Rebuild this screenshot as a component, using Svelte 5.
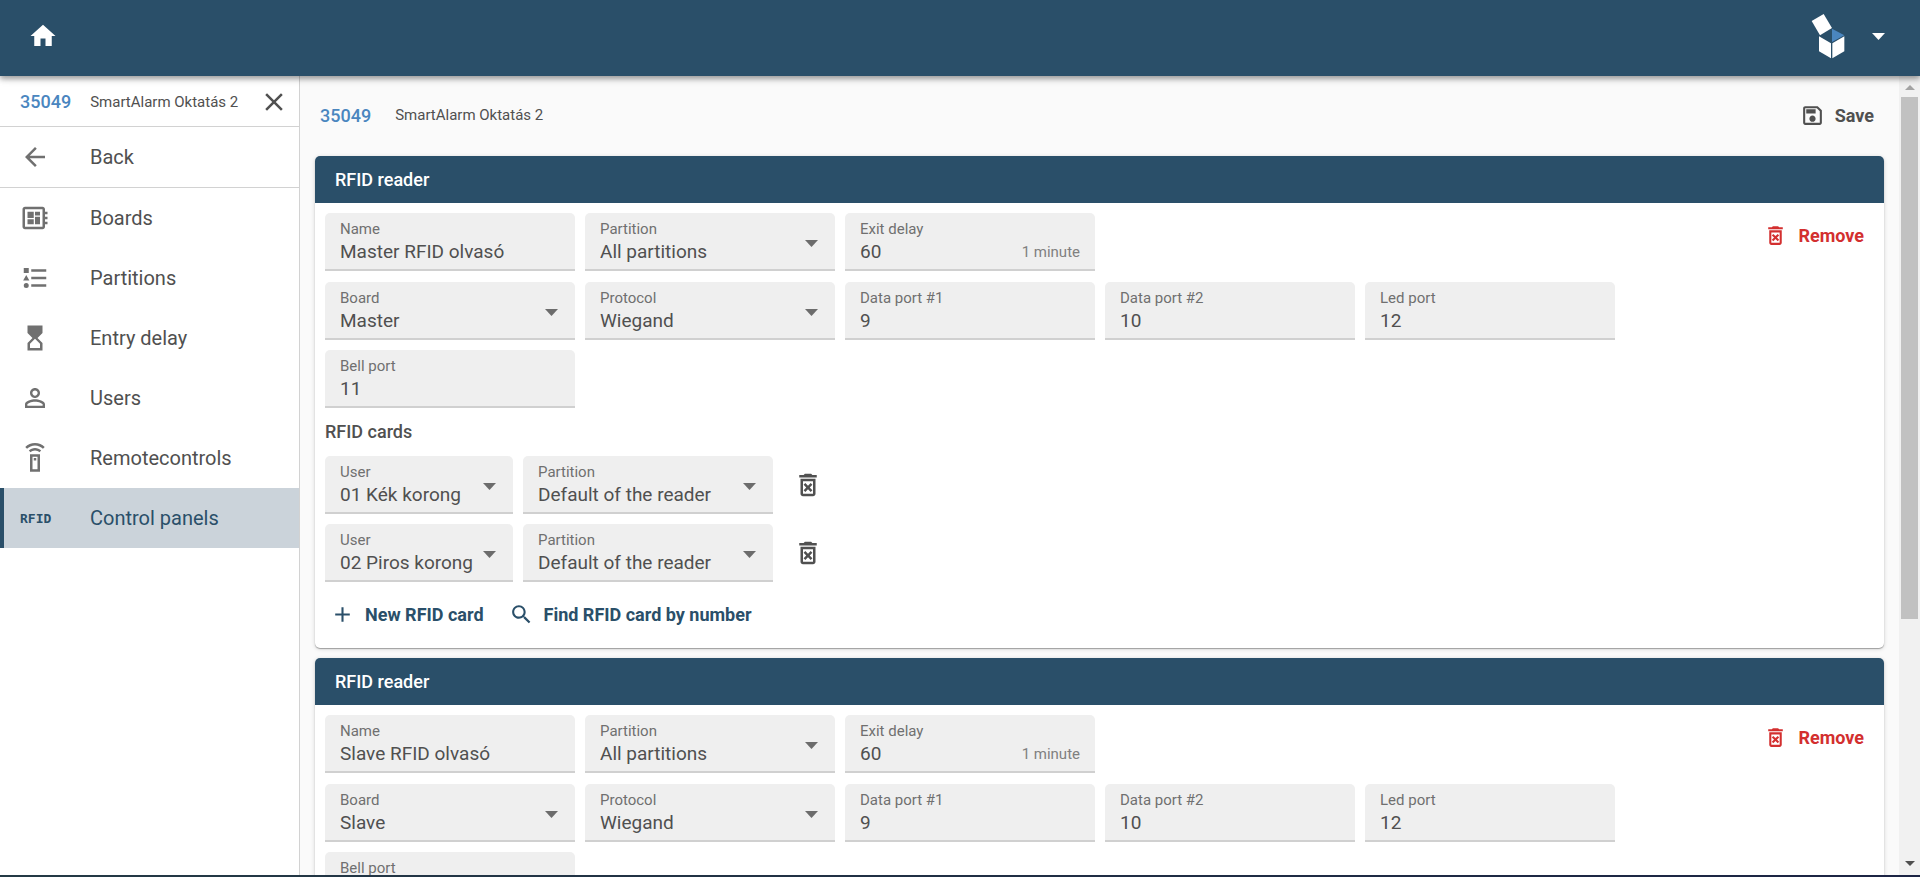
<script lang="ts">
	interface MenuItem {
		label: string;
		icon: string;
	}

	interface RfidCard {
		user: string;
		partition: string;
	}

	interface Reader {
		id: string;
		name: string;
		partition: string;
		exitDelay: number;
		exitDelayHint: string;
		board: string;
		protocol: string;
		ports: { label: string; value: number }[];
		cards: RfidCard[];
	}

	const panelId = '35049';
	const panelName = 'SmartAlarm Oktatás 2';

	const icons: Record<string, string> = {
		home: 'M10 20v-6h4v6h5v-8h3L12 3 2 12h3v8z',
		close: 'M19 6.41L17.59 5 12 10.59 6.41 5 5 6.41 10.59 12 5 17.59 6.41 19 12 13.41 17.59 19 19 17.59 13.41 12z',
		back: 'M20 11H7.83l5.59-5.59L12 4l-8 8 8 8 1.41-1.41L7.83 13H20v-2z',
		board: 'M22 9V7h-2V5c0-1.1-.9-2-2-2H4c-1.1 0-2 .9-2 2v14c0 1.1.9 2 2 2h14c1.1 0 2-.9 2-2v-2h2v-2h-2v-2h2v-2h-2V9h2zm-4 10H4V5h14v14zM6 13h5v4H6zm6-6h4v3h-4zM6 7h5v5H6zm6 4h4v6h-4z',
		list: 'M5 9.5L7.5 14h-5L5 9.5M3 4h4v4H3V4M5 20a2 2 0 0 0 2-2 2 2 0 0 0-2-2 2 2 0 0 0-2 2 2 2 0 0 0 2 2M9 5v2h12V5H9M9 19h12v-2H9v2M9 13h12v-2H9v2z',
		hourglass: 'M6 2l.01 6L10 12l-3.99 4.01L6 22h12v-6l-4-4 4-3.99V2H6zm10 14.5V20H8v-3.5l4-4 4 4z',
		person: 'M12 5.9c1.16 0 2.1.94 2.1 2.1s-.94 2.1-2.1 2.1S9.9 9.16 9.9 8s.94-2.1 2.1-2.1m0 9c2.97 0 6.1 1.46 6.1 2.1v1.1H5.9V17c0-.64 3.13-2.1 6.1-2.1M12 4C9.79 4 8 5.79 8 8s1.79 4 4 4 4-1.79 4-4-1.79-4-4-4zm0 9c-2.67 0-8 1.34-8 4v3h16v-3c0-2.66-5.33-4-8-4z',
		remote: 'M8 9v14h8V9H8zm6 12h-4V11h4v10zM11 12h2v2h-2zM7.05 6.05l1.41 1.41C9.37 6.56 10.62 6 12 6s2.63.56 3.54 1.46l1.41-1.41C15.68 4.78 13.93 4 12 4s-3.68.78-4.95 2.05zM12 0C8.96 0 6.21 1.23 4.22 3.22l1.41 1.41C7.26 3.01 9.51 2 12 2s4.74 1.01 6.36 2.64l1.41-1.41C17.79 1.23 15.04 0 12 0z',
		save: 'M17 3H5c-1.11 0-2 .9-2 2v14c0 1.1.89 2 2 2h14c1.1 0 2-.9 2-2V7l-4-4zm2 16H5V5h11.17L19 7.83V19zm-7-7c-1.66 0-3 1.34-3 3s1.34 3 3 3 3-1.34 3-3-1.34-3-3-3zM6 6h9v4H6z',
		trash: 'M14.12 10.47L12 12.59l-2.13-2.12-1.41 1.41L10.59 14l-2.12 2.12 1.41 1.41L12 15.41l2.12 2.12 1.41-1.41L13.41 14l2.12-2.12zM15.5 4l-1-1h-5l-1 1H5v2h14V4zM6 19c0 1.1.9 2 2 2h8c1.1 0 2-.9 2-2V7H6v12zM8 9h8v10H8V9z',
		plus: 'M19 13h-6v6h-2v-6H5v-2h6V5h2v6h6v2z',
		search: 'M15.5 14h-.79l-.28-.27C15.41 12.59 16 11.11 16 9.5 16 5.91 13.09 3 9.5 3S3 5.91 3 9.5 5.91 16 9.5 16c1.61 0 3.09-.59 4.23-1.57l.27.28v.79l5 4.99L20.49 19l-4.99-5zm-6 0C7.01 14 5 11.99 5 9.5S7.01 5 9.5 5 14 7.01 14 9.5 11.99 14 9.5 14z'
	};

	const menu: MenuItem[] = [
		{ label: 'Boards', icon: 'board' },
		{ label: 'Partitions', icon: 'list' },
		{ label: 'Entry delay', icon: 'hourglass' },
		{ label: 'Users', icon: 'person' },
		{ label: 'Remotecontrols', icon: 'remote' },
		{ label: 'Control panels', icon: 'rfid' }
	];

	const ports = [
		{ label: 'Data port #1', value: 9 },
		{ label: 'Data port #2', value: 10 },
		{ label: 'Led port', value: 12 },
		{ label: 'Bell port', value: 11 }
	];

	const cards: RfidCard[] = [
		{ user: '01 Kék korong', partition: 'Default of the reader' },
		{ user: '02 Piros korong', partition: 'Default of the reader' }
	];

	let active = $state('Control panels');

	let readers: Reader[] = $state([
		{
			id: 'master',
			name: 'Master RFID olvasó',
			partition: 'All partitions',
			exitDelay: 60,
			exitDelayHint: '1 minute',
			board: 'Master',
			protocol: 'Wiegand',
			ports,
			cards
		},
		{
			id: 'slave',
			name: 'Slave RFID olvasó',
			partition: 'All partitions',
			exitDelay: 60,
			exitDelayHint: '1 minute',
			board: 'Slave',
			protocol: 'Wiegand',
			ports,
			cards
		}
	]);

	function removeReader(id: string) {
		readers = readers.filter((reader) => reader.id !== id);
	}

	function removeCard(reader: Reader, index: number) {
		reader.cards = reader.cards.filter((_, i) => i !== index);
	}
</script>

{#snippet icon(name: string)}
	<svg class="icon" viewBox="0 0 24 24" aria-hidden="true"><path d={icons[name]} /></svg>
{/snippet}

{#snippet caret()}
	<svg class="caret" viewBox="0 0 13 7" aria-hidden="true"><path d="M0 0h13L6.5 7z" /></svg>
{/snippet}

{#snippet textField(label: string, value: string | number, hint?: string)}
	<label class="field">
		<span class="field-main">
			<span class="field-label">{label}</span>
			<span class="field-line">
				<input type="text" {value} />
				{#if hint}<span class="hint">{hint}</span>{/if}
			</span>
		</span>
	</label>
{/snippet}

{#snippet selectField(label: string, value: string, narrow = false)}
	<label class="field select" class:narrow>
		<span class="field-main">
			<span class="field-label">{label}</span>
			<select>
				<option>{value}</option>
			</select>
		</span>
		{@render caret()}
	</label>
{/snippet}

<div class="app">
	<header class="topbar">
		<a class="home" href="#home" aria-label="Home">{@render icon('home')}</a>
		<button class="account" aria-label="Account menu">
			<svg class="logo" viewBox="60 38 111 141" aria-hidden="true">
				<path class="face" d="M65 62l36-21 25 42-36 22z" />
				<path class="face" d="M87 108l36 21v45l-36-21zM127 129l36-21v45l-36 21z" />
				<path class="inside" d="M126 85l37 20-37 20z" />
			</svg>
			{@render caret()}
		</button>
	</header>

	<div class="body">
		<nav class="sidebar">
			<div class="sidebar-head">
				<span class="panel-id">{panelId}</span>
				<span class="panel-name">{panelName}</span>
				<button class="close" aria-label="Close">{@render icon('close')}</button>
			</div>
			<a class="menu-item back" href="#back">
				<span class="menu-icon">{@render icon('back')}</span>
				Back
			</a>
			{#each menu as item}
				<a
					class="menu-item"
					class:active={item.label === active}
					href="#{item.icon}"
					onclick={() => (active = item.label)}
				>
					<span class="menu-icon">
						{#if item.icon === 'rfid'}
							<span class="rfid">RFID</span>
						{:else}
							{@render icon(item.icon)}
						{/if}
					</span>
					{item.label}
				</a>
			{/each}
		</nav>

		<main class="content">
			<div class="page-head">
				<span class="panel-id">{panelId}</span>
				<span class="panel-name">{panelName}</span>
				<button class="action save">{@render icon('save')}Save</button>
			</div>

			{#each readers as reader (reader.id)}
				<section class="card">
					<h2>RFID reader</h2>
					<div class="card-body">
						<div class="reader-top">
							<div class="row">
								{@render textField('Name', reader.name)}
								{@render selectField('Partition', reader.partition)}
								{@render textField('Exit delay', reader.exitDelay, reader.exitDelayHint)}
							</div>
							<button class="action remove" onclick={() => removeReader(reader.id)}>
								{@render icon('trash')}Remove
							</button>
						</div>
						<div class="row ports">
							{@render selectField('Board', reader.board)}
							{@render selectField('Protocol', reader.protocol)}
							{#each reader.ports as port}
								{@render textField(port.label, port.value)}
							{/each}
						</div>

						<h3>RFID cards</h3>
						<div class="rfid-cards">
							{#each reader.cards as card, i}
								<div class="row">
									{@render selectField('User', card.user, true)}
									{@render selectField('Partition', card.partition)}
									<button class="delete" aria-label="Delete card" onclick={() => removeCard(reader, i)}>
										{@render icon('trash')}
									</button>
								</div>
							{/each}
						</div>

						<div class="card-actions">
							<button class="action">{@render icon('plus')}New RFID card</button>
							<button class="action">{@render icon('search')}Find RFID card by number</button>
						</div>
					</div>
				</section>
			{/each}
		</main>

		<div class="scrollbar" aria-hidden="true">
			<svg class="up" viewBox="0 0 10 5"><path d="M0 5h10L5 0z" /></svg>
			<div class="track"><div class="thumb"></div></div>
			<svg class="down" viewBox="0 0 10 5"><path d="M0 0h10L5 5z" /></svg>
		</div>
	</div>

	<div class="bottom-edge"></div>
</div>

<style>
	:global(body) {
		background: #fafafa;
	}

	.app {
		--primary: #2a4f69;
		--accent: #4a86bf;
		--text: #505050;
		--muted: #707070;
		--line: #d2d2d2;
		display: flex;
		flex-direction: column;
		height: 100vh;
		overflow: hidden;
		font-family: Roboto, sans-serif;
		font-size: 18px;
		color: var(--text);
	}

	.app *,
	.app {
		box-sizing: border-box;
	}

	button,
	input,
	select {
		margin: 0;
		padding: 0;
		border: none;
		background: none;
		font: inherit;
		color: inherit;
	}

	button {
		display: flex;
		align-items: center;
		cursor: pointer;
	}

	a {
		color: inherit;
		text-decoration: none;
	}

	.icon {
		display: block;
		flex-shrink: 0;
		width: 30px;
		height: 30px;
		fill: currentColor;
	}

	.caret {
		flex-shrink: 0;
		width: 13px;
		height: 7px;
		fill: #6c6c6c;
		pointer-events: none;
	}

	.topbar {
		display: flex;
		align-items: center;
		justify-content: space-between;
		flex-shrink: 0;
		height: 76px;
		padding: 0 35px 4px 28px;
		background: var(--primary);
		color: #fff;
		box-shadow: 0 3px 5px rgba(0, 0, 0, 0.3), 0 1px 10px rgba(0, 0, 0, 0.16);
		z-index: 1;
	}

	.account {
		gap: 25px;
	}

	.account .caret {
		fill: #fff;
	}

	.logo {
		width: 37px;
		height: 47px;
	}

	.face {
		fill: #fff;
	}

	.inside {
		fill: var(--accent);
	}

	.body {
		display: flex;
		flex: 1;
		min-height: 0;
	}

	.sidebar {
		flex: 0 0 300px;
		border-right: 1px solid var(--line);
		background: #fff;
	}

	.sidebar-head {
		display: flex;
		align-items: center;
		height: 51px;
		padding: 1px 10px 0 20px;
		border-bottom: 1px solid var(--line);
	}

	.panel-id {
		font-weight: 500;
		color: var(--accent);
	}

	.panel-name {
		font-size: 15px;
	}

	.sidebar-head .panel-name {
		flex: 1;
		margin-left: 19px;
	}

	.menu-item {
		display: flex;
		align-items: center;
		height: 60px;
		padding-left: 20px;
		font-size: 20px;
	}

	.menu-item.back {
		height: 61px;
		border-bottom: 1px solid var(--line);
	}

	.menu-icon {
		width: 70px;
		color: var(--muted);
	}

	.menu-item.active {
		padding-left: 16px;
		border-left: 4px solid var(--primary);
		background: #cbd3da;
		color: var(--primary);
	}

	.active .menu-icon {
		color: var(--primary);
	}

	.rfid {
		display: block;
		font-family: 'DejaVu Sans Mono', monospace;
		font-size: 13px;
		font-weight: 700;
	}

	.content {
		flex: 1;
		min-width: 0;
		padding: 0 15px;
		overflow: hidden;
		background: #fafafa;
	}

	.page-head {
		display: flex;
		align-items: center;
		height: 80px;
		padding: 0 10px 2px 5px;
	}

	.page-head .panel-name {
		margin-left: 24px;
	}

	.action {
		gap: 10px;
		font-weight: 700;
		color: var(--primary);
	}

	.action .icon {
		width: 25px;
		height: 25px;
	}

	.action.save {
		margin-left: auto;
		color: var(--text);
	}

	.action.remove {
		height: 45px;
		padding-right: 10px;
		color: #d32f2f;
	}

	.card {
		margin-bottom: 10px;
		border-radius: 5px;
		background: #fff;
		box-shadow: 0 1px 1px rgba(0, 0, 0, 0.3), 0 1px 4px rgba(0, 0, 0, 0.16);
	}

	h2 {
		margin: 0;
		padding: 0 20px;
		border-radius: 5px 5px 0 0;
		background: var(--primary);
		color: #fff;
		font-size: 18px;
		font-weight: 500;
		line-height: 47px;
	}

	h3 {
		margin: 0;
		font-size: 18px;
		font-weight: 500;
		line-height: 48px;
	}

	.card-body {
		padding: 10px;
	}

	.reader-top {
		display: flex;
		justify-content: space-between;
		margin-bottom: 11px;
	}

	.row {
		display: flex;
		flex-wrap: wrap;
		gap: 10px;
	}

	.ports {
		padding-right: 200px;
	}

	.rfid-cards {
		display: grid;
		gap: 10px;
	}

	.field {
		display: flex;
		align-items: center;
		width: 250px;
		height: 58px;
		padding: 4px 15px 0;
		border-bottom: 2px solid #d0d0d0;
		border-radius: 5px 5px 0 0;
		background: #efefef;
	}

	.field.select {
		padding-right: 17px;
	}

	.field.narrow {
		width: 188px;
	}

	.field-main {
		display: flex;
		flex: 1;
		flex-direction: column;
		min-width: 0;
	}

	.field-label {
		font-size: 15px;
		line-height: 18px;
		color: var(--muted);
	}

	.field-line {
		display: flex;
		align-items: center;
	}

	input,
	select {
		flex: 1;
		min-width: 0;
		height: 28px;
		font-size: 19px;
		line-height: 28px;
		outline: none;
	}

	select {
		appearance: none;
	}

	.hint {
		font-size: 15px;
		color: #808080;
	}

	.delete {
		margin-left: 10px;
	}

	.card-actions {
		display: flex;
		align-items: center;
		gap: 25px;
		height: 56px;
		padding: 8px 5px 0;
	}

	.scrollbar {
		display: flex;
		flex: 0 0 21px;
		flex-direction: column;
		align-items: center;
		padding: 9px 0;
		background: #f1f1f1;
	}

	.scrollbar svg {
		width: 10px;
		height: 5px;
	}

	.up {
		fill: #a3a3a3;
	}

	.down {
		fill: #505050;
	}

	.track {
		flex: 1;
		width: 17px;
		margin: 7px 0;
	}

	.thumb {
		height: 69%;
		background: #c1c1c1;
	}

	.bottom-edge {
		flex-shrink: 0;
		height: 2px;
		background: linear-gradient(to right, #243a45, #1c2444);
	}
</style>
